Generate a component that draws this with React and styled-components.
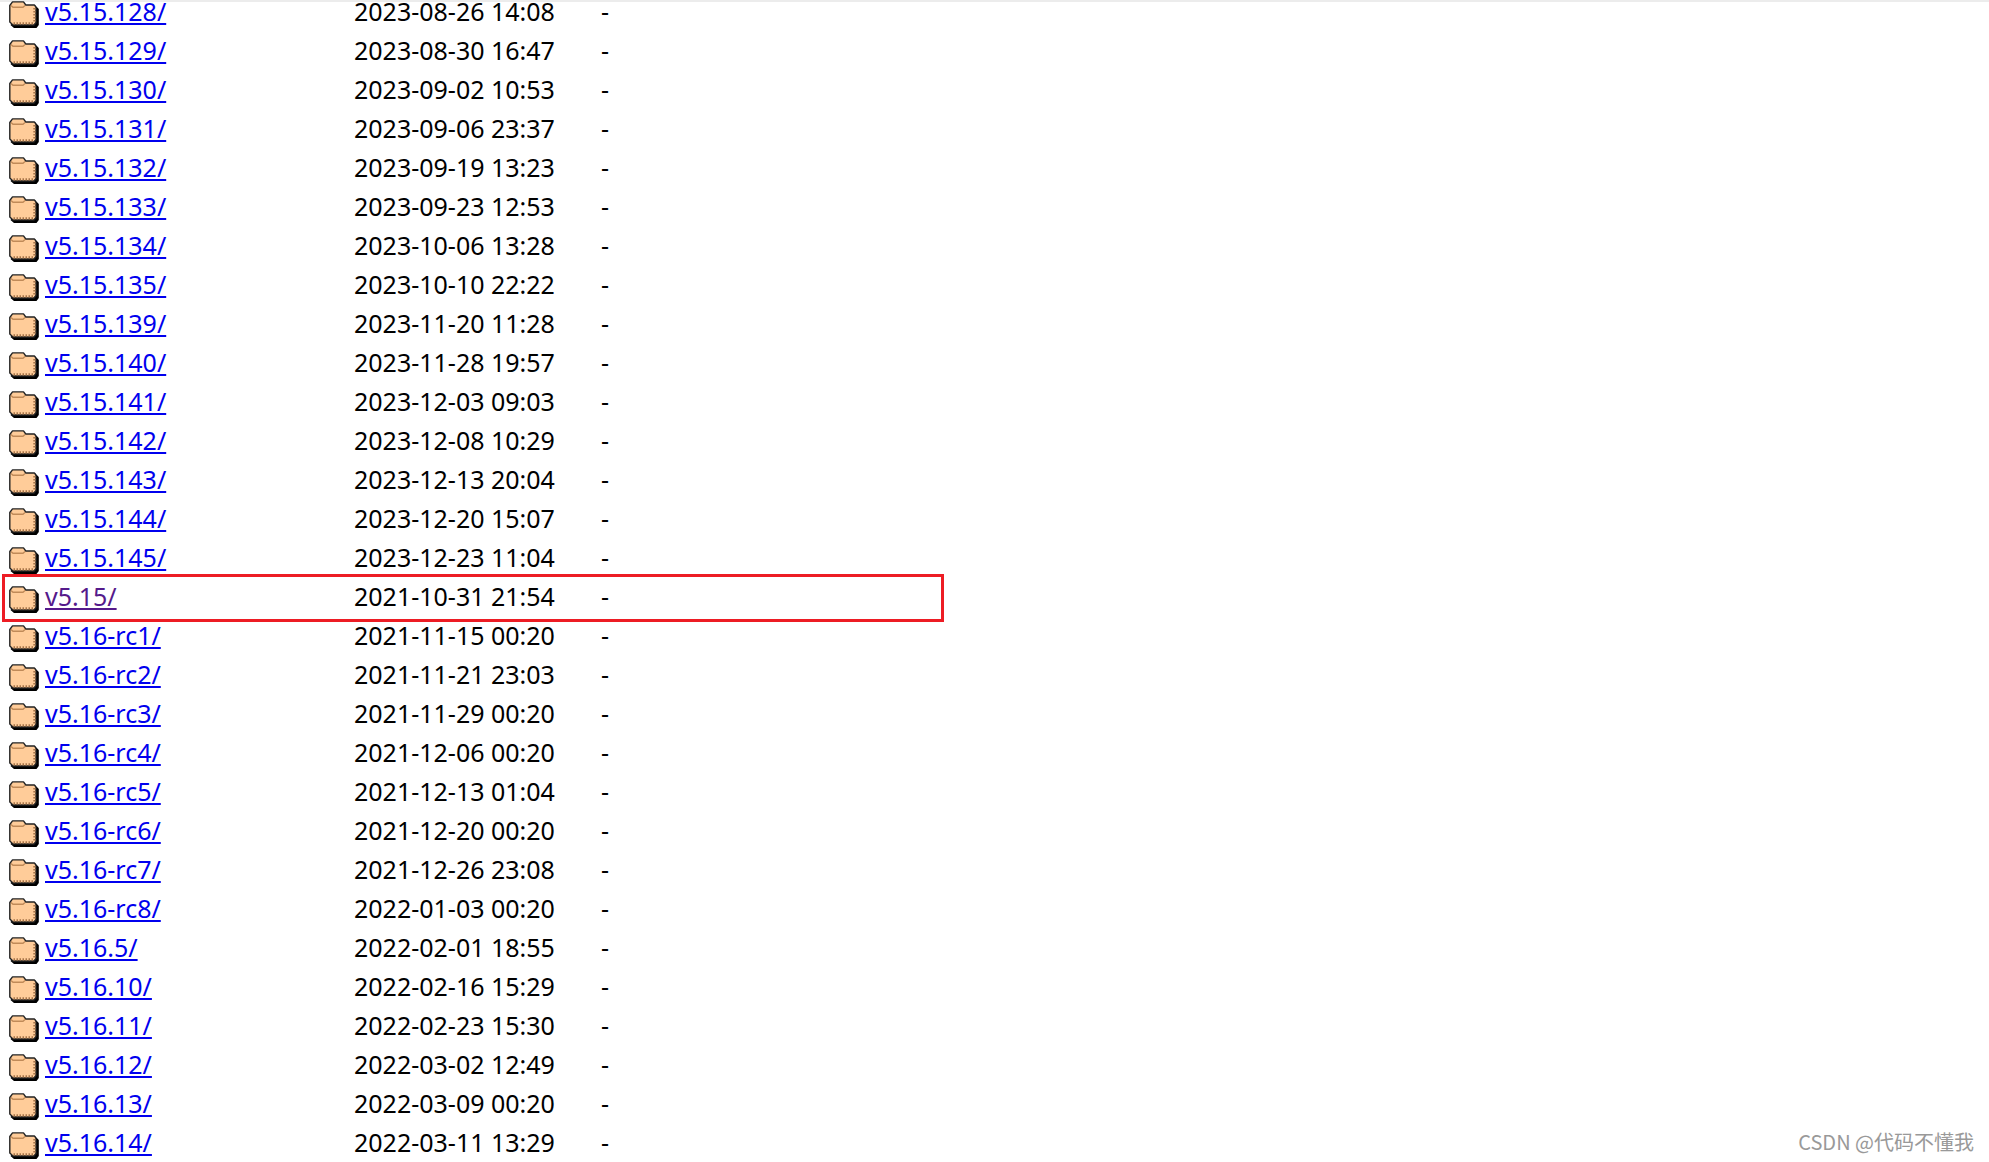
import React from "react";
import styled, { createGlobalStyle } from "styled-components";

const GlobalStyle = createGlobalStyle`
  body {
    margin: 0;
    background: #fff;
    color: #000;
    font-family: "Noto Sans", "Open Sans", sans-serif;
  }
`;

const Page = styled.main`
  position: relative;
  height: 100vh;
  overflow: hidden;
  box-shadow: inset 0 2px 0 #ececec;
`;

const Listing = styled.table`
  width: 100%;
  table-layout: fixed;
  border-collapse: collapse;
  font-size: 25px;
  line-height: 23px;
`;

const Column = styled.col`
  width: ${({ $width }) => ($width ? `${$width}px` : "auto")};
`;

const Row = styled.tr`
  height: 39px;
`;

const Cell = styled.td`
  position: relative;
  padding: 0;
  vertical-align: top;
  white-space: nowrap;
`;

const IconCell = styled(Cell)`
  padding: 1px 0 0 9px;
`;

const Folder = styled.svg`
  display: block;
  width: 30px;
  height: 27px;
`;

const EntryLink = styled.a`
  color: ${({ $visited }) => ($visited ? "#551a8b" : "#0000ee")};
  text-decoration: underline;
  text-decoration-thickness: 2px;
  text-underline-offset: 2px;
  text-decoration-skip-ink: none;
`;

const Highlight = styled.span`
  position: absolute;
  top: -11px;
  left: 2px;
  box-sizing: border-box;
  width: 942px;
  height: 48px;
  border: 3px solid #ed1c24;
  pointer-events: none;
`;

const Watermark = styled.footer`
  position: absolute;
  right: 15px;
  bottom: 8px;
  color: #999;
  font-family: "Noto Sans CJK SC", sans-serif;
  font-size: 20px;
  line-height: 24px;
`;

const entries = [
  ["v5.15.128/", "2023-08-26 14:08"],
  ["v5.15.129/", "2023-08-30 16:47"],
  ["v5.15.130/", "2023-09-02 10:53"],
  ["v5.15.131/", "2023-09-06 23:37"],
  ["v5.15.132/", "2023-09-19 13:23"],
  ["v5.15.133/", "2023-09-23 12:53"],
  ["v5.15.134/", "2023-10-06 13:28"],
  ["v5.15.135/", "2023-10-10 22:22"],
  ["v5.15.139/", "2023-11-20 11:28"],
  ["v5.15.140/", "2023-11-28 19:57"],
  ["v5.15.141/", "2023-12-03 09:03"],
  ["v5.15.142/", "2023-12-08 10:29"],
  ["v5.15.143/", "2023-12-13 20:04"],
  ["v5.15.144/", "2023-12-20 15:07"],
  ["v5.15.145/", "2023-12-23 11:04"],
  ["v5.15/", "2021-10-31 21:54"],
  ["v5.16-rc1/", "2021-11-15 00:20"],
  ["v5.16-rc2/", "2021-11-21 23:03"],
  ["v5.16-rc3/", "2021-11-29 00:20"],
  ["v5.16-rc4/", "2021-12-06 00:20"],
  ["v5.16-rc5/", "2021-12-13 01:04"],
  ["v5.16-rc6/", "2021-12-20 00:20"],
  ["v5.16-rc7/", "2021-12-26 23:08"],
  ["v5.16-rc8/", "2022-01-03 00:20"],
  ["v5.16.5/", "2022-02-01 18:55"],
  ["v5.16.10/", "2022-02-16 15:29"],
  ["v5.16.11/", "2022-02-23 15:30"],
  ["v5.16.12/", "2022-03-02 12:49"],
  ["v5.16.13/", "2022-03-09 00:20"],
  ["v5.16.14/", "2022-03-11 13:29"],
];

const SELECTED = "v5.15/";

function FolderIcon() {
  return (
    <Folder viewBox="0 0 30 27" aria-hidden="true">
      <path d="M3 22 V6 L6 4 H26 L29.8 8 V24 L27.5 27 H5 L1.5 24 Z" fill="#000" />
      <path
        d="M.8 4.5 L3.5 .9 H14.5 L16.8 4 H25.5 L27 6.5 V21.5 L25 24 H4 L.8 21 Z"
        fill="#ffcc99"
        stroke="#222"
        strokeWidth="1.4"
        strokeLinejoin="round"
      />
      <path d="M2 4.5 L4 6.3 H14 L16 4.5" fill="none" stroke="#c08a58" strokeWidth="1.4" />
      <path d="M25.4 7 V22" stroke="#a8754a" strokeWidth="2.2" strokeDasharray="1.5 1.5" />
      <path d="M4.5 22.3 H25" stroke="#a8754a" strokeWidth="2.2" strokeDasharray="1.5 1.5" />
    </Folder>
  );
}

export default function App() {
  return (
    <>
      <GlobalStyle />
      <Page>
        <Listing>
          <colgroup>
            <Column $width={45} />
            <Column $width={309} />
            <Column $width={247} />
            <Column />
          </colgroup>
          <tbody>
            {entries.map(([name, modified]) => (
              <Row key={name}>
                <IconCell>
                  <FolderIcon />
                  {name === SELECTED && <Highlight />}
                </IconCell>
                <Cell>
                  <EntryLink href={`#${name}`} $visited={name === SELECTED}>
                    {name}
                  </EntryLink>
                </Cell>
                <Cell>{modified}</Cell>
                <Cell>-</Cell>
              </Row>
            ))}
          </tbody>
        </Listing>
        <Watermark>CSDN @代码不懂我</Watermark>
      </Page>
    </>
  );
}
